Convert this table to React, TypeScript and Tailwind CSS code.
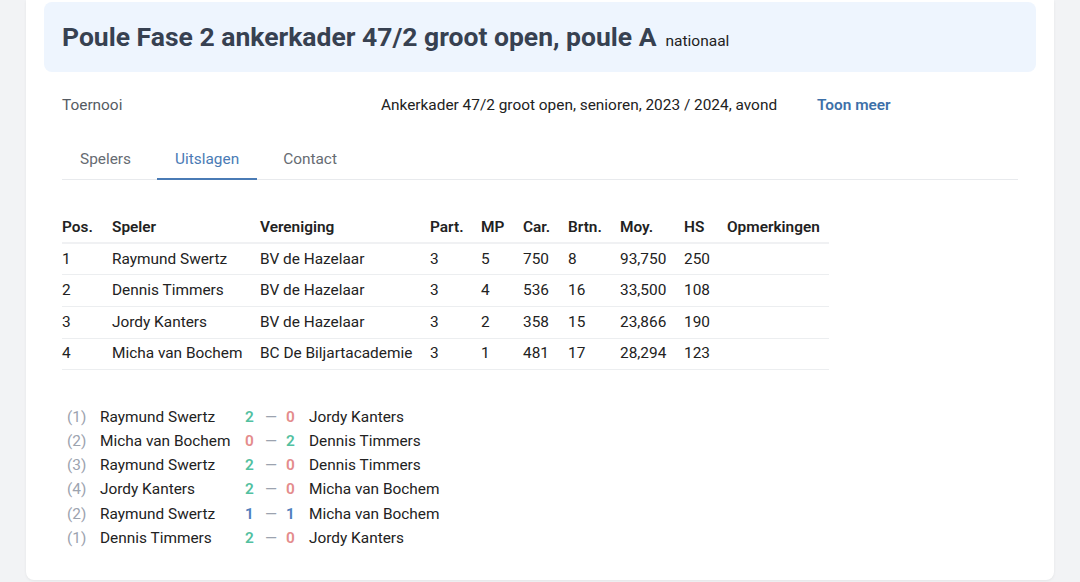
import React from 'react';

const players = [
  { pos: 1, name: 'Raymund Swertz', club: 'BV de Hazelaar', part: 3, mp: 5, car: 750, brtn: 8, moy: '93,750', hs: 250 },
  { pos: 2, name: 'Dennis Timmers', club: 'BV de Hazelaar', part: 3, mp: 4, car: 536, brtn: 16, moy: '33,500', hs: 108 },
  { pos: 3, name: 'Jordy Kanters', club: 'BV de Hazelaar', part: 3, mp: 2, car: 358, brtn: 15, moy: '23,866', hs: 190 },
  { pos: 4, name: 'Micha van Bochem', club: 'BC De Biljartacademie', part: 3, mp: 1, car: 481, brtn: 17, moy: '28,294', hs: 123 },
];

const matches = [
  { round: 1, home: 'Raymund Swertz', a: 2, b: 0, away: 'Jordy Kanters' },
  { round: 2, home: 'Micha van Bochem', a: 0, b: 2, away: 'Dennis Timmers' },
  { round: 3, home: 'Raymund Swertz', a: 2, b: 0, away: 'Dennis Timmers' },
  { round: 4, home: 'Jordy Kanters', a: 2, b: 0, away: 'Micha van Bochem' },
  { round: 2, home: 'Raymund Swertz', a: 1, b: 1, away: 'Micha van Bochem' },
  { round: 1, home: 'Dennis Timmers', a: 2, b: 0, away: 'Jordy Kanters' },
];

const scoreColor = (mine: number, other: number) => {
  if (mine > other) return 'text-[#52c0a0]';
  if (mine < other) return 'text-[#e48c8c]';
  return 'text-[#4d7fbd]';
};

// column widths of the standings table
const cols = ['w-[50px]', 'w-[148px]', 'w-[170px]', 'w-[51px]', 'w-[42px]', 'w-[45px]', 'w-[52px]', 'w-[64px]', 'w-[43px]', 'w-[102px]'];
const headers = ['Pos.', 'Speler', 'Vereniging', 'Part.', 'MP', 'Car.', 'Brtn.', 'Moy.', 'HS', 'Opmerkingen'];

const App = () => {
  const tabs = ['Spelers', 'Uitslagen', 'Contact'];
  const active = 'Uitslagen';

  return (
    <div className="min-h-[582px] bg-[#f2f3f5] font-['Roboto',sans-serif]">
      <div className="ml-[26px] w-[1028px] h-[580px] bg-white rounded-b-lg shadow-[0_1px_3px_rgba(0,0,0,0.06)] pt-[2px]">
        {/* Header */}
        <div className="mx-[18px] h-[70px] bg-[#eef5fe] rounded-lg px-[18px] pt-[4px] flex items-center">
          <div className="flex items-baseline gap-[9px]">
            <h1 className="text-[26.5px] font-bold text-[#374151] leading-none">Poule Fase 2 ankerkader 47/2 groot open, poule A</h1>
            <span className="text-[15.5px] text-[#222]">nationaal</span>
          </div>
        </div>

        <div className="px-9 text-[15.4px]">
          {/* Tournament info */}
          <div className="mt-[23px] flex leading-5">
            <div className="w-[319px] text-[#555b63]">Toernooi</div>
            <div className="w-[436px] text-[#222]">Ankerkader 47/2 groot open, senioren, 2023 / 2024, avond</div>
            <a className="font-semibold text-[#3d70a8]">Toon meer</a>
          </div>

          {/* Tabs */}
          <div className="mt-[24px] flex gap-[8px] border-b border-[#e8eaed]">
            {tabs.map((t) => (
              <div
                key={t}
                className={
                  t === active
                    ? 'px-[18px] pt-2.5 pb-[9px] leading-5 text-[#4a7bb5] border-b-2 border-[#4a7bb5] -mb-px'
                    : 'px-[18px] pt-2.5 pb-[9px] leading-5 text-[#666b72]'
                }
              >
                {t}
              </div>
            ))}
          </div>

          {/* Standings */}
          <table className="mt-[34px] text-[#222] border-collapse">
            <thead>
              <tr className="h-[29px] border-b-2 border-[#f0f1f3]">
                {headers.map((h, i) => (
                  <th key={h} className={`${cols[i]} text-left font-semibold p-0 align-middle`}>{h}</th>
                ))}
              </tr>
            </thead>
            <tbody>
              {players.map((p) => (
                <tr key={p.pos} className="h-[31.7px] border-b border-[#eceef0]">
                  <td>{p.pos}</td>
                  <td>{p.name}</td>
                  <td>{p.club}</td>
                  <td>{p.part}</td>
                  <td>{p.mp}</td>
                  <td>{p.car}</td>
                  <td>{p.brtn}</td>
                  <td>{p.moy}</td>
                  <td>{p.hs}</td>
                  <td></td>
                </tr>
              ))}
            </tbody>
          </table>

          {/* Matches */}
          <div className="mt-[35px] flex flex-col">
            {matches.map((m, i) => (
              <div key={i} className="flex items-center h-[24.2px]">
                <span className="w-[38px] pl-[5px] text-[#9ca3af]">({m.round})</span>
                <span className="w-[145px] text-[#222]">{m.home}</span>
                <span className="w-[64px] flex items-center font-semibold">
                  <span className={`w-[20px] ${scoreColor(m.a, m.b)}`}>{m.a}</span>
                  <span className="w-[21px] text-[#9ca3af] font-normal">—</span>
                  <span className={scoreColor(m.b, m.a)}>{m.b}</span>
                </span>
                <span className="text-[#222]">{m.away}</span>
              </div>
            ))}
          </div>
        </div>
      </div>
    </div>
  );
};

export default App;
